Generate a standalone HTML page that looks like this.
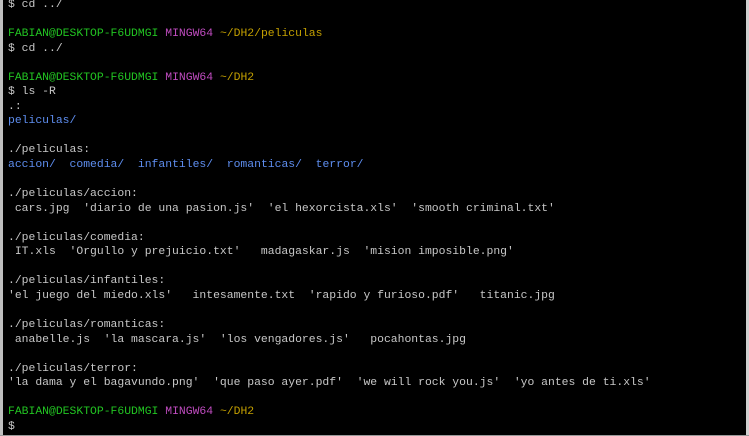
<!DOCTYPE html>
<html><head><style>
html,body{margin:0;padding:0;background:#000;width:749px;height:436px;overflow:hidden}
.l{position:absolute;left:0;top:0;width:3px;height:436px;background:#bfbfbf}
.r{position:absolute;right:0;top:0;width:3px;height:436px;background:#d0d0d0}
.b{position:absolute;left:0;bottom:0;width:749px;height:1px;background:#999}
pre{position:absolute;left:8px;top:-2px;margin:0;font-family:"Liberation Mono",monospace;font-size:11.4px;line-height:14.55px;color:#c8c8c8}
.g{color:#22c422}.m{color:#c04cc0}.y{color:#c4a000}.c{color:#5e8ef0}
</style></head><body>
<div class="l"></div><div class="r"></div><div class="b"></div>
<pre>$ cd ../

<span class="g">FABIAN@DESKTOP-F6UDMGI</span> <span class="m">MINGW64</span> <span class="y">~/DH2/peliculas</span>
$ cd ../

<span class="g">FABIAN@DESKTOP-F6UDMGI</span> <span class="m">MINGW64</span> <span class="y">~/DH2</span>
$ ls -R
.:
<span class="c">peliculas/</span>

./peliculas:
<span class="c">accion/</span>  <span class="c">comedia/</span>  <span class="c">infantiles/</span>  <span class="c">romanticas/</span>  <span class="c">terror/</span>

./peliculas/accion:
 cars.jpg  'diario de una pasion.js'  'el hexorcista.xls'  'smooth criminal.txt'

./peliculas/comedia:
 IT.xls  'Orgullo y prejuicio.txt'   madagaskar.js  'mision imposible.png'

./peliculas/infantiles:
'el juego del miedo.xls'   intesamente.txt  'rapido y furioso.pdf'   titanic.jpg

./peliculas/romanticas:
 anabelle.js  'la mascara.js'  'los vengadores.js'   pocahontas.jpg

./peliculas/terror:
'la dama y el bagavundo.png'  'que paso ayer.pdf'  'we will rock you.js'  'yo antes de ti.xls'

<span class="g">FABIAN@DESKTOP-F6UDMGI</span> <span class="m">MINGW64</span> <span class="y">~/DH2</span>
$</pre>
</body></html>
